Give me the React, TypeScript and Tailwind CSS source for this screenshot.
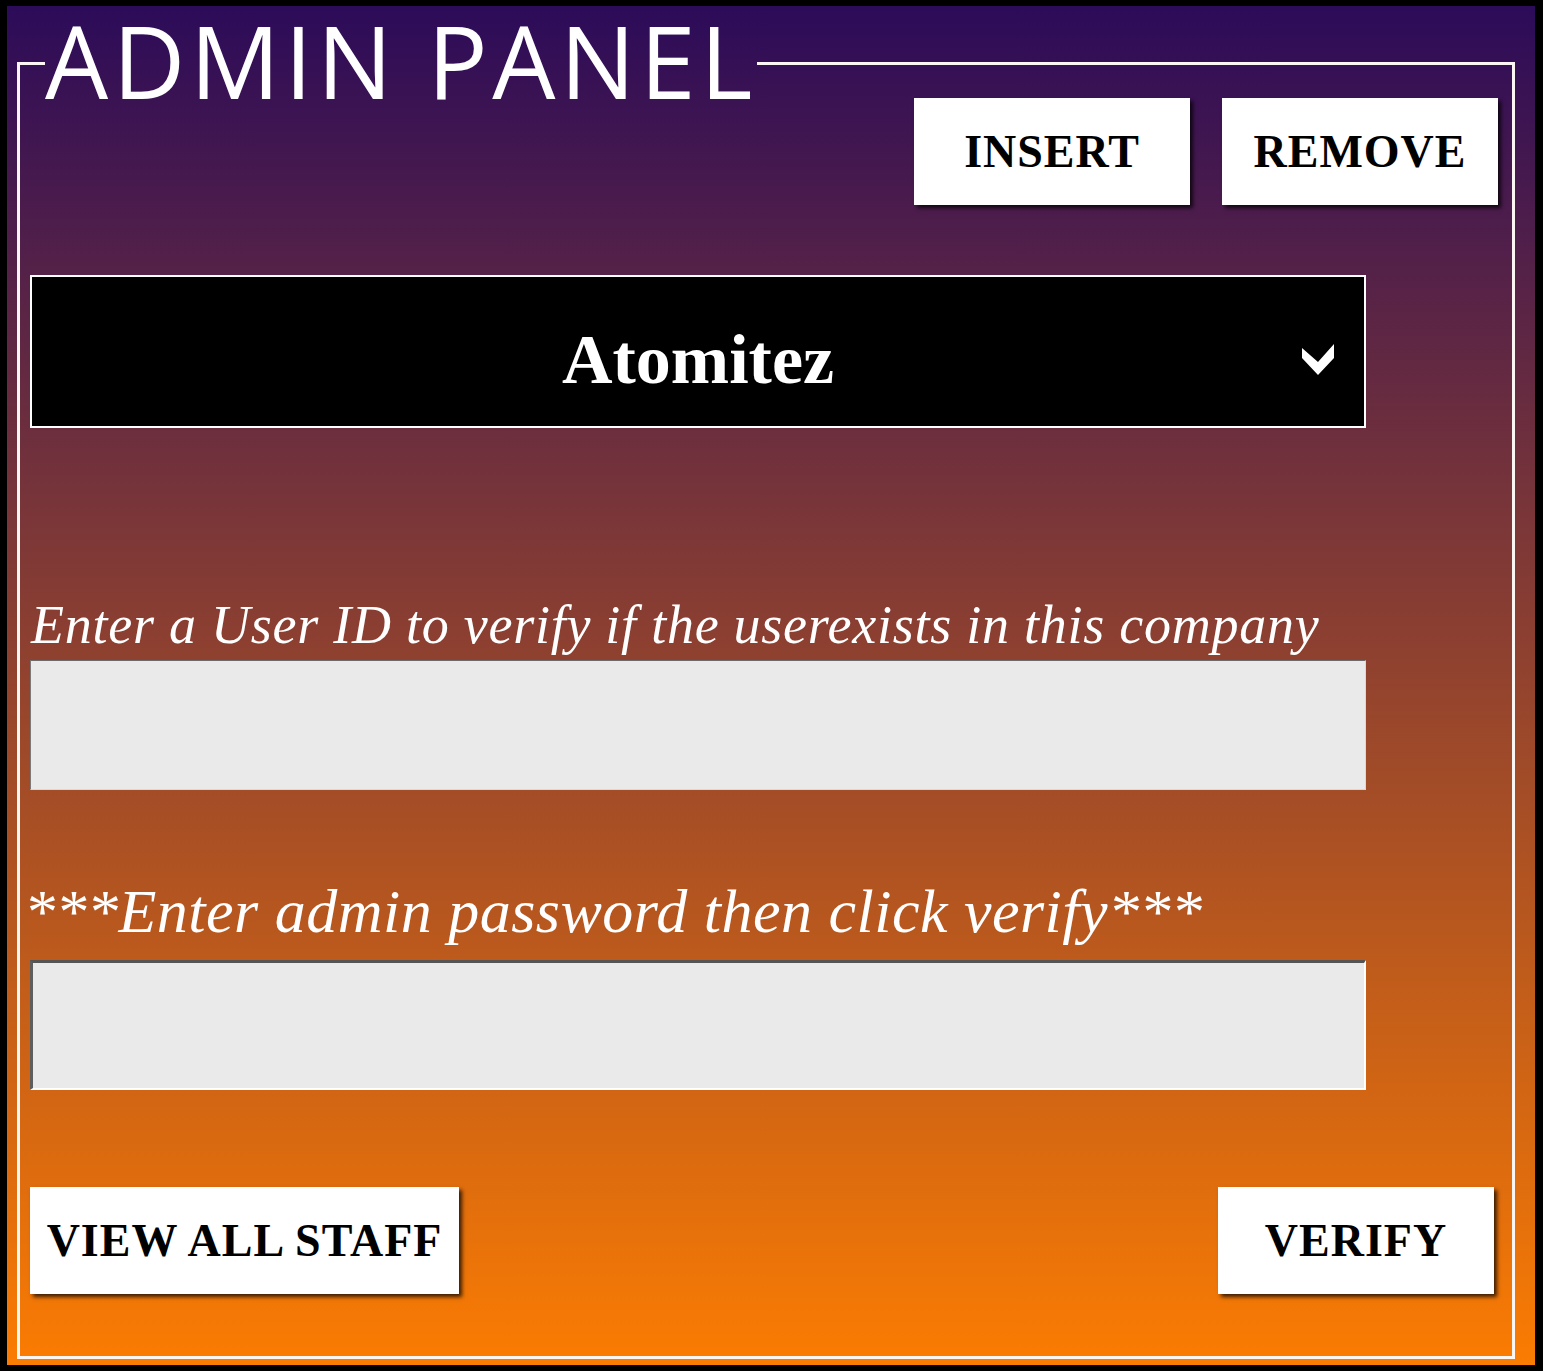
import { useState } from "react";

function PanelButton({ label, width }: { label: string; width: string }) {
  return (
    <button
      type="button"
      className={`${width} h-[107px] bg-white text-black font-['Liberation_Serif',serif] font-bold text-[46px] tracking-[1px] leading-none shadow-[3px_3px_4px_rgba(0,0,0,0.75)]`}
    >
      {label}
    </button>
  );
}

function Chevron() {
  return (
    <svg width="32" height="32" viewBox="0 0 32 32" className="block">
      <polygon points="0,4 16,18 32,0 32,14 16,31 0,14" fill="#ffffff" />
    </svg>
  );
}

export default function App() {
  const [userId, setUserId] = useState("");
  const [password, setPassword] = useState("");

  return (
    <div className="w-[1543px] h-[1371px] bg-[linear-gradient(to_bottom,#2c0b59,#fb7c02)] border-l-[7px] border-r-[8px] border-y-[6px] border-black">
      <fieldset className="ml-[10px] mt-[4px] w-[1498px] h-[1349px] border-[3px] border-[#fbf6f4] pl-[10px] pr-[14px] flex flex-col">
        <legend className="ml-[15px] whitespace-nowrap font-['Open_Sans',sans-serif] text-[100px] leading-[100px] pb-[6px] tracking-[4.6px] text-white">
          ADMIN PANEL
        </legend>

        <div className="-mt-[18px] flex justify-end gap-[32px]">
          <PanelButton label="INSERT" width="w-[276px]" />
          <PanelButton label="REMOVE" width="w-[276px]" />
        </div>

        <button
          type="button"
          className="mt-[70px] w-[1336px] h-[153px] bg-black border-2 border-white grid grid-cols-[1fr_auto_1fr] items-center pt-[16px] text-white"
        >
          <span />
          <span className="font-['Liberation_Serif',serif] font-bold text-[70px] leading-none">
            Atomitez
          </span>
          <span className="justify-self-end mr-[30px]">
            <Chevron />
          </span>
        </button>

        <label className="mt-[170px] ml-[1px] font-['Liberation_Serif',serif] italic text-[54px] tracking-[0.75px] leading-none text-white whitespace-nowrap">
          Enter a User ID to verify if the userexists in this company
        </label>
        <input
          type="text"
          value={userId}
          onChange={(e) => setUserId(e.target.value)}
          className="mt-[8px] w-[1336px] h-[130px] bg-[#eaeaea] border border-t-[#6b6b6b] border-l-[#7a7a7a] border-b-[#d9d9d9] border-r-[#d9d9d9] outline-none px-4 text-[40px]"
        />

        <label className="mt-[90px] -ml-[6px] font-['Liberation_Serif',serif] italic text-[62px] tracking-[0.5px] leading-none text-white whitespace-nowrap">
          ***Enter admin password then click verify***
        </label>
        <input
          type="password"
          value={password}
          onChange={(e) => setPassword(e.target.value)}
          className="mt-[18px] w-[1336px] h-[130px] bg-[#eaeaea] border-t-[3px] border-l-[3px] border-b-2 border-r-2 border-t-[#555555] border-l-[#5e5e5e] border-b-white border-r-white outline-none px-4 text-[40px]"
        />

        <div className="mt-[97px] flex justify-between pr-[4px]">
          <PanelButton label="VIEW ALL STAFF" width="w-[429px]" />
          <PanelButton label="VERIFY" width="w-[276px]" />
        </div>
      </fieldset>
    </div>
  );
}
